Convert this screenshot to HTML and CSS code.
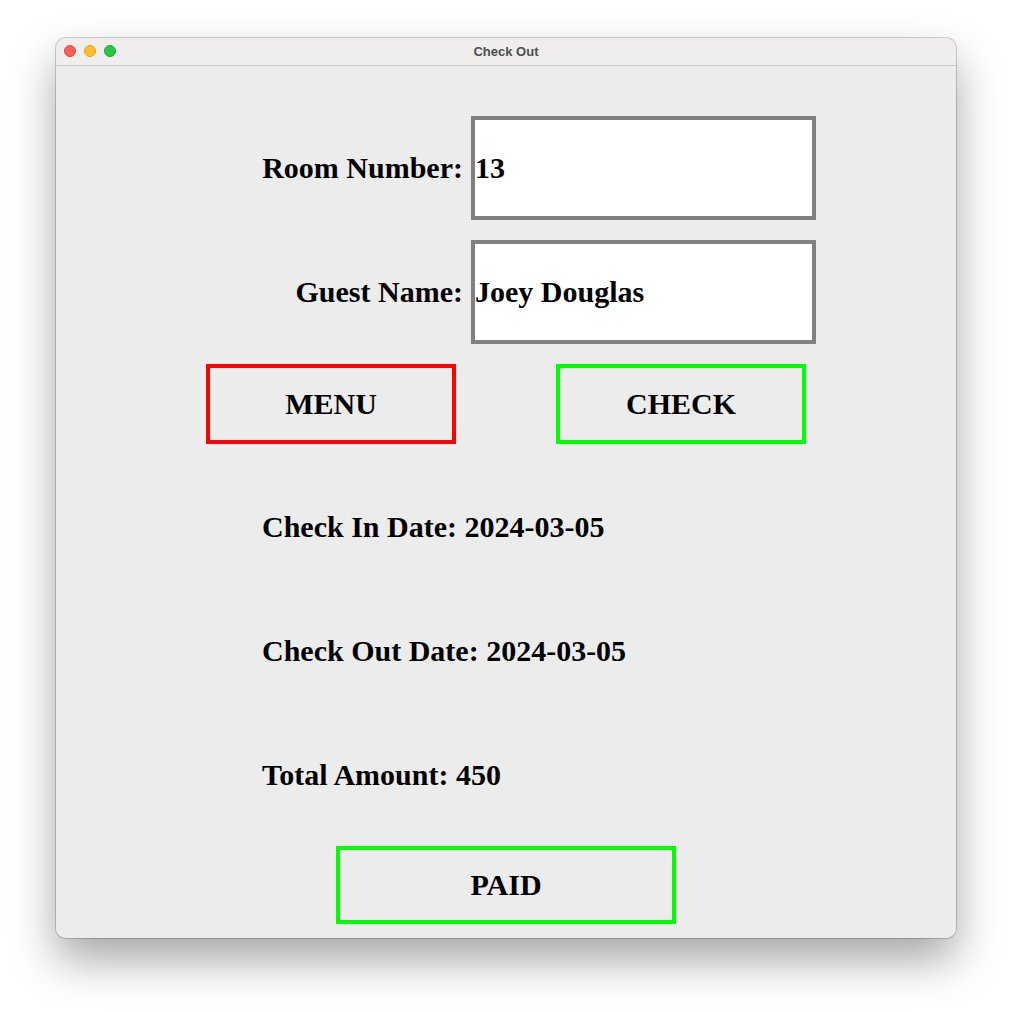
FILE: index.html
```html
<!DOCTYPE html>
<html>
<head>
<meta charset="utf-8">
<title>Check Out</title>
<link rel="stylesheet" href="styles.css">
</head>
<body>
<div class="window">
  <div class="titlebar">
    <div class="lights">
      <span class="light red"></span>
      <span class="light yellow"></span>
      <span class="light green"></span>
    </div>
    <div class="title">Check Out</div>
  </div>
  <div class="content">
    <div class="form">
      <label class="label">Room Number:</label>
      <div class="field">13</div>
      <label class="label">Guest Name:</label>
      <div class="field">Joey Douglas</div>
    </div>
    <div class="buttons">
      <div class="btn btn-red">MENU</div>
      <div class="btn btn-green">CHECK</div>
    </div>
    <div class="info">
      <div class="info-row">Check In Date: 2024-03-05</div>
      <div class="info-row">Check Out Date: 2024-03-05</div>
      <div class="info-row">Total Amount: 450</div>
    </div>
    <div class="paid-wrap">
      <div class="btn btn-green btn-paid">PAID</div>
    </div>
  </div>
</div>
</body>
</html>
```
FILE: styles.css
```css
html, body {
  margin: 0;
  padding: 0;
  background: #ffffff;
}
body {
  width: 1012px;
  height: 1012px;
  position: relative;
  overflow: hidden;
}
.window {
  position: absolute;
  left: 56px;
  top: 38px;
  width: 900px;
  height: 900px;
  border-radius: 10px;
  background: #ececec;
  box-shadow: 0 0 0 1px rgba(0,0,0,0.18), 0 22px 45px rgba(0,0,0,0.35);
  overflow: hidden;
  font-family: "Liberation Serif", "Times New Roman", serif;
  font-weight: bold;
  color: #000;
}
.titlebar {
  height: 27px;
  background: #efeeed;
  border-bottom: 1px solid #c9c9c9;
  display: flex;
  align-items: center;
  justify-content: center;
  position: relative;
}
.lights {
  position: absolute;
  left: 8px;
  top: 7px;
  display: flex;
  gap: 8px;
}
.light {
  width: 12px;
  height: 12px;
  border-radius: 50%;
  display: block;
  box-sizing: border-box;
}
.light.red { background: #ff5f57; border: 0.5px solid #e14640; }
.light.yellow { background: #febc2e; border: 0.5px solid #dfa023; }
.light.green { background: #28c840; border: 0.5px solid #1aab29; }
.title {
  font-family: "Liberation Sans", Arial, sans-serif;
  font-weight: bold;
  font-size: 13px;
  color: #4d4d4d;
}
.content {
  height: 872px;
  background: #ececec;
}
.form {
  display: grid;
  grid-template-columns: 415px 345px;
  row-gap: 20px;
  padding-top: 50px;
}
.label {
  font-size: 30px;
  line-height: 104px;
  text-align: right;
  padding-right: 8px;
  white-space: nowrap;
}
.field {
  box-sizing: border-box;
  height: 104px;
  border: 4px solid #808080;
  background: #ffffff;
  font-size: 30px;
  line-height: 96px;
  padding-left: 0;
  white-space: nowrap;
}
.buttons {
  display: flex;
  justify-content: center;
  gap: 100px;
  margin-top: 20px;
}
.btn {
  box-sizing: border-box;
  width: 250px;
  height: 80px;
  font-size: 30px;
  line-height: 72px;
  text-align: center;
}
.btn-red { border: 4px solid #ff0000; }
.btn-green { border: 4px solid #00ff00; }
.info {
  margin-top: 21px;
  padding-left: 206px;
}
.info-row {
  font-size: 30px;
  line-height: 124px;
  height: 124px;
  white-space: nowrap;
}
.paid-wrap {
  display: flex;
  justify-content: center;
  margin-top: 9px;
}
.btn-paid {
  width: 340px;
  height: 78px;
  line-height: 70px;
}
```
